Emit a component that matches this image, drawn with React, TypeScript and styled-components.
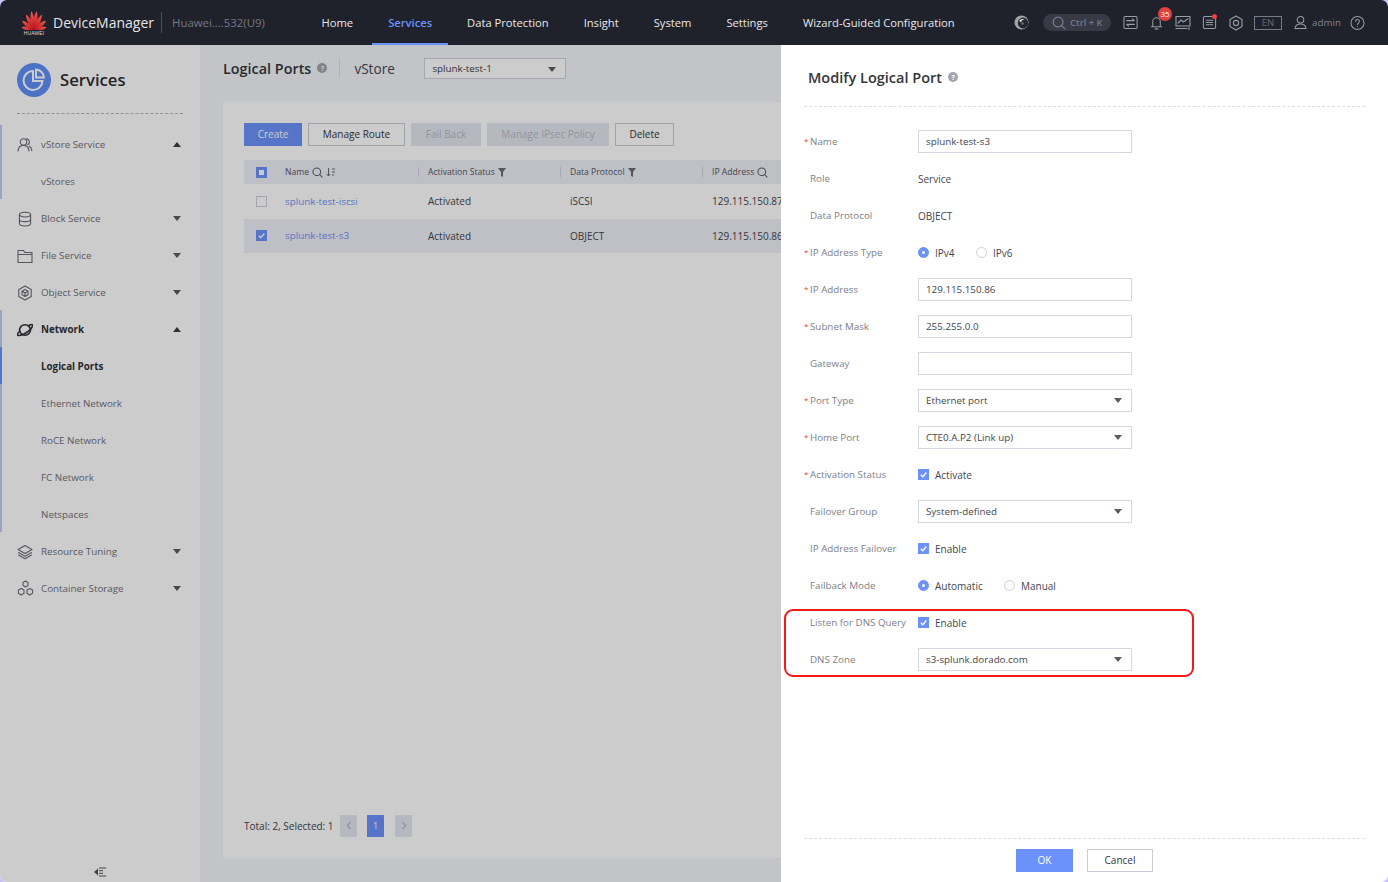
import React from "react";
import styled, { createGlobalStyle } from "styled-components";

const Global = createGlobalStyle`
  html, body { margin: 0; padding: 0; height: 100%; background: #c9c2fb; overflow: hidden; }
  body { font-family: "Open Sans", "Noto Sans", sans-serif; color: #333; }
  * { box-sizing: border-box; }
`;

const Shell = styled.div`
  position: relative; width: 1388px; height: 882px; border-radius: 7px; overflow: hidden;
  display: flex; flex-direction: column; background: #f4f5fb;
`;

/* Top bar */
const TopBar = styled.header`
  position: relative; z-index: 3; flex: 0 0 45px; height: 45px; display: flex; align-items: stretch;
  background: #1f212b; color: #fff; padding-left: 21px;
`;
const Brand = styled.div`display: flex; align-items: center; flex: 0 0 284.5px;`;
const LogoBox = styled.div`display: flex; flex-direction: column; align-items: center; width: 26px; margin-top: 1px;`;
const LogoWord = styled.span`font-family: "Liberation Sans", sans-serif; font-size: 5px; line-height: 6px; letter-spacing: .1px; color: #ddd;`;
const Product = styled.span`margin-left: 6px; font-size: 14px; color: #e4e5e8; white-space: nowrap; width: 108px;`;
const VSep = styled.span`width: 1px; height: 21px; background: #4b4d57;`;
const Device = styled.span`margin-left: 10px; font-size: 11.4px; color: #777a84; white-space: nowrap;`;
const Nav = styled.nav`display: flex; gap: 3px; flex: 0 0 695px;`;
const NavItem = styled.a<{ $active?: boolean }>`
  display: flex; align-items: center; padding: 1px 16px 0; font-size: 11.2px; white-space: nowrap; height: 45px;
  color: ${p => (p.$active ? "#6c92fa" : "#e8e9ec")}; font-weight: ${p => (p.$active ? 600 : 400)};
  border-bottom: 2px solid ${p => (p.$active ? "#6c92fa" : "transparent")};
`;
const Tools = styled.div`display: flex; align-items: center; color: #9a9da6; margin-left: 10.5px; height: 45px;`;
const Pill = styled.div`
  display: flex; align-items: center; width: 68px; height: 17px; margin-left: 11px; border-radius: 9px; background: #383b46;
  padding-left: 9px; gap: 4px; font-size: 9.4px; font-weight: 600; color: #757985; white-space: nowrap;
`;
const ToolSlot = styled.span<{ $w: number }>`
  position: relative; display: flex; align-items: center; justify-content: center; width: ${p => p.$w}px;
`;
const Badge = styled.span`
  position: absolute; left: 9px; top: -7px; width: 14px; height: 14px; border-radius: 50%; background: #e2403f; color: #fff;
  font-size: 8px; line-height: 14px; text-align: center;
`;
const Dot = styled.span`position: absolute; left: 10px; top: -1px; width: 5px; height: 5px; border-radius: 50%; background: #e8413f;`;
const Lang = styled.span`
  display: block; width: 28px; height: 14px; margin-left: -1px; border: 1px solid #777a84; font-size: 9.5px; line-height: 12px;
  text-align: center; color: #666a74;
`;
const Admin = styled.span`font-size: 9.8px; color: #82858e; margin-left: -6px; width: 38px;`;

const Body = styled.div`flex: 1; display: flex; min-height: 0;`;

/* Sidebar */
const Sidebar = styled.aside`position: relative; flex: 0 0 200px; background: #fff; padding: 0 17px; display: flex; flex-direction: column;`;
const SideHead = styled.div`
  height: 69px; display: flex; align-items: center; gap: 9px; padding-top: 1px;
  border-bottom: 1px dashed #b5b8c3; font-size: 16.7px; font-weight: 600; color: #2b2d33;
`;
const Menu = styled.div`display: flex; flex-direction: column; margin: 11px -17px 0;`;
const MenuGroup = styled.div<{ $open?: boolean }>`
  position: relative; display: flex; flex-direction: column;
  border-left: 2px solid ${p => (p.$open ? "#c0cdf4" : "transparent")};
`;
const MenuRow = styled.div<{ $strong?: boolean; $sub?: boolean; $active?: boolean }>`
  position: relative; height: 37px; display: flex; align-items: center; padding: 2px 0 0 ${p => (p.$sub ? 39 : 15)}px;
  font-size: 9.8px; font-weight: ${p => (p.$strong ? 700 : 400)}; color: ${p => (p.$strong ? "#2f3138" : "#6f7178")};
  ${p => (p.$active ? "box-shadow: -2px 0 0 #6c92fa;" : "")}
`;
const MenuIcon = styled.span`display: flex; width: 24px; color: #6b6d75;`;
const MenuIconDark = styled(MenuIcon)`color: #2f3138;`;
const Caret = styled.span<{ $up?: boolean }>`
  position: absolute; left: 171px; top: 17px; width: 0; height: 0; border-left: 4px solid transparent; border-right: 4px solid transparent;
  ${p => (p.$up ? "border-bottom: 5px solid #3b3d44;" : "border-top: 5px solid #5c5e66;")}
`;
const Collapse = styled.div`position: absolute; left: 94px; bottom: 5px; display: flex; color: #555;`;

/* Main */
const Main = styled.main`flex: 1; display: flex; flex-direction: column; padding: 0 23px 24px 23px; min-width: 0;`;
const PageHead = styled.div`height: 57px; display: flex; align-items: center; padding-bottom: 11px; white-space: nowrap;`;
const PageTitle = styled.h1`margin: 0; font-size: 14.4px; font-weight: 600; color: #33353b;`;
const Help = styled.span`
  display: inline-flex; align-items: center; justify-content: center; width: 10px; height: 10px; border-radius: 50%;
  margin-left: 6px; background: #a2a5ae; color: #fff; font-size: 7px; font-weight: 700;
`;
const HeadSep = styled.span`width: 1px; height: 20px; margin: 0 14px 0 12px; background: #dfe1e8;`;
const StoreLabel = styled.span`font-size: 13.6px; color: #45474e; width: 70px;`;
const PageSelect = styled.div`
  position: relative; width: 142px; height: 21px; margin-top: 1px; border: 1px solid #cfd2dc; background: #fff; padding-left: 7px;
  font-size: 9.8px; line-height: 19px; color: #3b3d44;
`;
const SelectCaret = styled.span`
  position: absolute; right: 9px; top: 8px; width: 0; height: 0; border-left: 4px solid transparent; border-right: 4px solid transparent;
  border-top: 5px solid #5a5c64;
`;
const Card = styled.section`flex: 1; background: #fff; padding: 21px 0 0 21px; display: flex; flex-direction: column; min-height: 0;`;
const Toolbar = styled.div`display: flex; gap: 6px; height: 23px;`;
const Btn = styled.button<{ $kind?: "primary" | "off"; $w: number }>`
  width: ${p => p.$w}px; height: 23px; padding: 0 0 2px; font-family: inherit; font-size: 10px; border-radius: 0;
  ${p => (p.$kind === "primary" ? "background:#6c92fa;color:#fff;border:1px solid #6c92fa;"
    : p.$kind === "off" ? "background:#e4e7f0;color:#b4b8c4;border:1px solid #e4e7f0;"
    : "background:#fff;color:#33353b;border:1px solid #c8ccd8;")}
`;
const Table = styled.div`margin-top: 14px; display: flex; flex-direction: column;`;
const THead = styled.div`display: grid; grid-template-columns: 41px 143px 142px 142px 1fr; height: 24px; align-items: center; background: #eef0f8; font-size: 8.6px; color: #55575e;`;
const TRow = styled.div<{ $sel?: boolean }>`
  display: grid; grid-template-columns: 41px 143px 142px 142px 1fr; height: 34.5px; align-items: center; font-size: 10px; color: #44464d;
  background: ${p => (p.$sel ? "#eef0f8" : "#fff")};
`;
const Th = styled.div`position: relative; display: flex; align-items: center; gap: 3px; height: 100%; color: #55575e;`;
const ThSep = styled.span`position: absolute; left: -10px; top: 7px; height: 10px; width: 1px; background: #d0d3dd;`;
const CheckCell = styled.div`display: flex; padding-left: 12px;`;
const Check = styled.span<{ $state?: "off" | "on" | "part" }>`
  position: relative; display: flex; align-items: center; justify-content: center; width: 11px; height: 11px; flex: none;
  background: ${p => (p.$state === "off" ? "#fff" : "#6c92fa")}; border: 1px solid ${p => (p.$state === "off" ? "#cdd0da" : "#6c92fa")};
`;
const PartMark = styled.span`width: 5px; height: 5px; background: #fff;`;
const Link = styled.span`color: #6c92fa; font-size: 9.8px;`;
const Spacer = styled.div`flex: 1;`;
const Pager = styled.div`display: flex; align-items: center; height: 23px; margin-bottom: 21px; font-size: 10px; color: #44464d;`;
const PagerText = styled.span`width: 96px; white-space: nowrap;`;
const PageBtn = styled.span<{ $on?: boolean; $gap?: number }>`
  display: flex; align-items: center; justify-content: center; width: 17px; height: 22px; margin-right: ${p => p.$gap ?? 10}px;
  background: ${p => (p.$on ? "#6c92fa" : "#e4e7f0")}; color: ${p => (p.$on ? "#fff" : "#b0b4c0")}; font-size: 9px;
`;

/* Mask and drawer */
const Mask = styled.div`position: absolute; left: 0; right: 0; top: 45px; bottom: 0; background: rgba(0,0,0,.2); z-index: 1;`;
const Drawer = styled.aside`
  position: absolute; z-index: 2; left: 781px; right: 0; top: 45px; bottom: 0; background: #fff; padding: 0 23px; display: flex; flex-direction: column;
`;
const DrawerHead = styled.div`
  height: 62px; display: flex; align-items: center; padding: 3px 0 0 4px; border-bottom: 1px dashed #dcdee8;
  font-size: 14.500px; font-weight: 600; color: #33353b; white-space: nowrap;
`;
const Form = styled.div`display: flex; flex-direction: column; padding-top: 16px; flex: 1;`;
const Row = styled.div`display: flex; align-items: center; height: 37px; font-size: 10px; color: #44464d;`;
const Label = styled.label<{ $req?: boolean }>`
  position: relative; flex: 0 0 114px; padding-left: 6px; color: #7d8088; font-size: 9.8px; white-space: nowrap;
  ${p => (p.$req ? `&::before { content: "*"; position: absolute; left: 0; top: 0; font-size: 8px; color: #e8413f; }` : "")}
`;
const Input = styled.div`
  position: relative; width: 214px; height: 23px; border: 1px solid #d5d7e2; padding-left: 7px; line-height: 21px; color: #44464d; font-size: 9.8px; background: #fff;
`;
const Radio = styled.span<{ $on?: boolean }>`
  position: relative; width: 11px; height: 11px; flex: none; border-radius: 50%; margin-right: 6px;
  border: 1px solid ${p => (p.$on ? "#6c92fa" : "#cdd0da")}; background: ${p => (p.$on ? "#6c92fa" : "#fff")};
  ${p => (p.$on ? `&::after { content: ""; position: absolute; left: 3px; top: 3px; width: 3px; height: 3px; border-radius: 50%; background: #fff; }` : "")}
`;
const Choice = styled.span<{ $w: number }>`display: flex; align-items: center; width: ${p => p.$w}px;`;
const CheckText = styled.span`margin-left: 6px;`;
const Focus = styled.div`position: relative; display: flex; flex-direction: column;`;
const Highlight = styled.div`
  position: absolute; left: -20px; top: 5px; width: 410px; height: 68px; border: 2px solid #f1191c; border-radius: 9px; pointer-events: none;
`;
const DrawerFoot = styled.div`
  height: 44px; border-top: 1px dashed #dcdee8; display: flex; align-items: flex-start; padding: 10px 0 0 212px; gap: 14px; flex: none;
`;

const Tick = () => (
  <svg width="9" height="9" viewBox="0 0 10 10"><path d="M2 5.2 4.2 7.4 8.2 2.8" fill="none" stroke="#fff" strokeWidth="1.5" /></svg>
);
const petals: [number, number][] = [[-78, .78], [-52, .92], [-27, 1.06], [-8, 1.16], [8, 1.16], [27, 1.06], [52, .92], [78, .78]];
const Logo = () => (
  <svg width="26" height="20" viewBox="-13 -20 26 20">
    <defs>
      <linearGradient id="petal" x1="0" y1="0" x2="0" y2="1">
        <stop offset="0" stopColor="#ee5a50" /><stop offset="1" stopColor="#b90e1a" />
      </linearGradient>
    </defs>
    {petals.map(([a, k]) => (
      <path key={a} d="M0 0C-2.600-5-2.500-12 0-16.500 2.500-12 2.600-5 0 0Z" fill="url(#petal)" transform={`rotate(${a}) scale(1 ${k})`} />
    ))}
  </svg>
);
const Ico = ({ w = 16, h = 16, vb = "0 0 16 16", sw = 1.1, children }: { w?: number; h?: number; vb?: string; sw?: number; children: React.ReactNode }) => (
  <svg width={w} height={h} viewBox={vb} fill="none" stroke="currentColor" strokeWidth={sw} strokeLinecap="round" strokeLinejoin="round">{children}</svg>
);
const SearchIco = ({ s = 11 }: { s?: number }) => (
  <Ico w={s} h={s} vb="0 0 12 12"><circle cx="5.2" cy="5.2" r="4.2" /><path d="M8.4 8.4 11 11" /></Ico>
);
const FilterIco = () => (
  <svg width="8" height="9" viewBox="0 0 8 9"><path d="M0 0H8L5 4V9L3 8V4Z" fill="#6a6c74" /></svg>
);
const Chevron = ({ d }: { d: string }) => (
  <svg width="6" height="9" viewBox="0 0 6 9"><path d={d} fill="none" stroke="currentColor" strokeWidth="1.2" /></svg>
);

const menuIcons: Record<string, React.ReactNode> = {
  users: <Ico><circle cx="6.500" cy="5" r="3.200" /><path d="M1 14c.3-3.600 2.500-5.600 5.500-5.600S11.700 10.400 12 14" /><path d="M9.500 1.900a3.100 3.100 0 0 1 1.300 5.800M12.300 9.300c1.500.9 2.300 2.500 2.600 4.300" /></Ico>,
  db: <Ico><ellipse cx="8" cy="3.600" rx="5.600" ry="2.400" /><path d="M2.400 3.600v9c0 1.300 2.500 2.400 5.600 2.400s5.600-1.100 5.600-2.400v-9M2.400 8.200c0 1.300 2.500 2.400 5.600 2.400s5.600-1.100 5.600-2.400" /></Ico>,
  folder: <Ico><path d="M1 2.500h5.500l1.300 2H15v10H1zM1 6.500h14" /></Ico>,
  hex: <Ico><path d="M8 1 14.200 4.500v7L8 15 1.800 11.500v-7z" /><path d="M8 4.500 11 6.200v3.600L8 11.500 5 9.800V6.200zM5 6.200 8 8l3-1.800M8 8v3.500" /></Ico>,
  planet: <Ico sw={1.600}><ellipse cx="8" cy="8" rx="5.500" ry="5.200" /><path d="M12 3.500C14.500 2 16 2.300 15.500 4 14.800 6.500 11 10 6.500 12.200 2.500 14 0 14 .5 12 .8 11 1.800 10 3 9" /></Ico>,
  layers: <Ico><path d="M8 1.500 15 5.500 8 9.500 1 5.500zM1.500 8.500 8 12.200l6.500-3.700M1.500 11 8 14.700 14.500 11" /></Ico>,
  hexes: <Ico w={17} h={17} vb="0 0 17 17"><path d="M8.500 1 11 2.500v3L8.500 7 6 5.500v-3zM4.200 8.500 7 10v3.300L4.200 15l-2.800-1.700V10zM12.800 8.500 15.600 10v3.300L12.800 15 10 13.300V10z" /></Ico>,
};

const Item = ({ icon, label, caret, strong }: { icon: string; label: string; caret?: "up" | "down"; strong?: boolean }) => {
  const I = strong ? MenuIconDark : MenuIcon;
  return (
    <MenuRow $strong={strong}>
      <I>{menuIcons[icon]}</I>{label}
      {caret && <Caret $up={caret === "up"} />}
    </MenuRow>
  );
};

const Select = ({ value }: { value: string }) => <Input>{value}<SelectCaret /></Input>;
const CheckField = ({ label }: { label: string }) => (
  <><Check $state="on"><Tick /></Check><CheckText>{label}</CheckText></>
);

export default function App() {
  return (
    <Shell>
      <Global />
      <TopBar>
        <Brand>
          <LogoBox><Logo /><LogoWord>HUAWEI</LogoWord></LogoBox>
          <Product>DeviceManager</Product>
          <VSep />
          <Device>Huawei....532(U9)</Device>
        </Brand>
        <Nav>
          <NavItem>Home</NavItem>
          <NavItem $active>Services</NavItem>
          <NavItem>Data Protection</NavItem>
          <NavItem>Insight</NavItem>
          <NavItem>System</NavItem>
          <NavItem>Settings</NavItem>
          <NavItem>Wizard-Guided Configuration</NavItem>
        </Nav>
        <Tools>
          <ToolSlot $w={21}>
            <svg width="15" height="15" viewBox="0 0 15 15"><circle cx="7.500" cy="7.500" r="7" fill="#a3a4a8" /><ellipse cx="9" cy="8" rx="5.200" ry="5.400" fill="#26272d" /><path d="M5 5.800c1.500-2 4-2.400 6-1.300-2.200 0-3.600 1-4 3z" fill="#d8d8da" /><circle cx="8.500" cy="8.500" r="1.300" fill="#6d6e72" /></svg>
          </ToolSlot>
          <Pill><SearchIco s={14} />Ctrl + K</Pill>
          <ToolSlot $w={38}>
            <Ico w={15} h={15}><rect x="1" y="1.500" width="14" height="13" rx="1.500" /><path d="M4 6h8l-2-2M12 10H4l2 2" /></Ico>
          </ToolSlot>
          <ToolSlot $w={15}>
            <Ico w={17} h={17}><path d="M2.500 12.500h11M4 12.500V7a4 4 0 0 1 8 0v5.500M6.500 14.800h3" /></Ico>
            <Badge>35</Badge>
          </ToolSlot>
          <ToolSlot $w={38}>
            <Ico w={16} h={16}><rect x="1" y="1.500" width="14" height="9.500" /><path d="M3 8l3-3 2.500 2L13 3.800M1 13.500h11M14 12.500v2" /></Ico>
          </ToolSlot>
          <ToolSlot $w={15}>
            <Ico w={15} h={15}><rect x="1.500" y="1.500" width="13" height="13" rx="1.500" /><path d="M4.500 5.500h7M4.500 8h7M4.500 10.500h7" /></Ico>
            <Dot />
          </ToolSlot>
          <ToolSlot $w={38}>
            <Ico w={16} h={16}><path d="M8 1 14 4.500v7L8 15 2 11.500v-7z" /><circle cx="8" cy="8" r="2.600" /></Ico>
          </ToolSlot>
          <Lang>EN</Lang>
          <ToolSlot $w={36}>
            <Ico w={15} h={15}><circle cx="8" cy="5" r="3.500" /><path d="M2 14.500c.4-3.400 2.500-5 6-5s5.600 1.600 6 5z" /></Ico>
          </ToolSlot>
          <Admin>admin</Admin>
          <ToolSlot $w={15}>
            <Ico w={16} h={16}><circle cx="8" cy="8" r="7" /><path d="M6 6.200a2 2 0 1 1 3.200 1.600C8.400 8.400 8 8.800 8 9.700M8 11.800v.2" /></Ico>
          </ToolSlot>
        </Tools>
      </TopBar>
      <Body>
        <Sidebar>
          <SideHead>
            <svg width="34" height="34" viewBox="0 0 34 34">
              <circle cx="17" cy="17" r="17" fill="#5e8ff8" />
              <path d="M16 8a9.500 9.500 0 1 0 9.500 10H16z" fill="none" stroke="#fff" strokeWidth="2" />
              <path d="M19 6.500a8.500 8.500 0 0 1 8 8h-8zM19 10.500v4" fill="none" stroke="#fff" strokeWidth="2" />
            </svg>
            Services
          </SideHead>
          <Menu>
            <MenuGroup $open>
              <Item icon="users" label="vStore Service" caret="up" />
              <MenuRow $sub>vStores</MenuRow>
            </MenuGroup>
            <MenuGroup>
              <Item icon="db" label="Block Service" caret="down" />
              <Item icon="folder" label="File Service" caret="down" />
              <Item icon="hex" label="Object Service" caret="down" />
            </MenuGroup>
            <MenuGroup $open>
              <Item icon="planet" label="Network" caret="up" strong />
              <MenuRow $sub $strong $active>Logical Ports</MenuRow>
              <MenuRow $sub>Ethernet Network</MenuRow>
              <MenuRow $sub>RoCE Network</MenuRow>
              <MenuRow $sub>FC Network</MenuRow>
              <MenuRow $sub>Netspaces</MenuRow>
            </MenuGroup>
            <MenuGroup>
              <Item icon="layers" label="Resource Tuning" caret="down" />
              <Item icon="hexes" label="Container Storage" caret="down" />
            </MenuGroup>
          </Menu>
          <Collapse>
            <svg width="12" height="10" viewBox="0 0 12 10"><path d="M0 5 4 1.500v7z" fill="currentColor" /><path d="M5 1h7M5 3.700h4M5 6.300h4M5 9h7" stroke="currentColor" strokeWidth="1" /></svg>
          </Collapse>
        </Sidebar>
        <Main>
          <PageHead>
            <PageTitle>Logical Ports</PageTitle>
            <Help>?</Help>
            <HeadSep />
            <StoreLabel>vStore</StoreLabel>
            <PageSelect>splunk-test-1<SelectCaret /></PageSelect>
          </PageHead>
          <Card>
            <Toolbar>
              <Btn $kind="primary" $w={58}>Create</Btn>
              <Btn $w={97}>Manage Route</Btn>
              <Btn $kind="off" $w={70}>Fail Back</Btn>
              <Btn $kind="off" $w={122}>Manage IPsec Policy</Btn>
              <Btn $w={59}>Delete</Btn>
            </Toolbar>
            <Table>
              <THead>
                <CheckCell><Check $state="part"><PartMark /></Check></CheckCell>
                <Th>Name <SearchIco />
                  <svg width="9" height="9" viewBox="0 0 9 9"><path d="M2.500 0v8M.5 6l2 2 2-2M6 1h3M6 4h3M6 7h2" fill="none" stroke="#6a6c74" /></svg>
                </Th>
                <Th><ThSep />Activation Status <FilterIco /></Th>
                <Th><ThSep />Data Protocol <FilterIco /></Th>
                <Th><ThSep />IP Address <SearchIco /></Th>
              </THead>
              <TRow>
                <CheckCell><Check $state="off" /></CheckCell>
                <Link>splunk-test-iscsi</Link><span>Activated</span><span>iSCSI</span><span>129.115.150.87</span>
              </TRow>
              <TRow $sel>
                <CheckCell><Check $state="on"><Tick /></Check></CheckCell>
                <Link>splunk-test-s3</Link><span>Activated</span><span>OBJECT</span><span>129.115.150.86</span>
              </TRow>
            </Table>
            <Spacer />
            <Pager>
              <PagerText>Total: 2, Selected: 1</PagerText>
              <PageBtn><Chevron d="M4.500 1 1.500 4.500 4.500 8" /></PageBtn>
              <PageBtn $on $gap={11}>1</PageBtn>
              <PageBtn><Chevron d="M1.500 1 4.500 4.500 1.500 8" /></PageBtn>
            </Pager>
          </Card>
        </Main>
      </Body>
      <Mask />
      <Drawer>
        <DrawerHead>Modify Logical Port<Help>?</Help></DrawerHead>
        <Form>
          <Row><Label $req>Name</Label><Input>splunk-test-s3</Input></Row>
          <Row><Label>Role</Label>Service</Row>
          <Row><Label>Data Protocol</Label>OBJECT</Row>
          <Row><Label $req>IP Address Type</Label><Choice $w={58}><Radio $on />IPv4</Choice><Choice $w={60}><Radio />IPv6</Choice></Row>
          <Row><Label $req>IP Address</Label><Input>129.115.150.86</Input></Row>
          <Row><Label $req>Subnet Mask</Label><Input>255.255.0.0</Input></Row>
          <Row><Label>Gateway</Label><Input /></Row>
          <Row><Label $req>Port Type</Label><Select value="Ethernet port" /></Row>
          <Row><Label $req>Home Port</Label><Select value="CTE0.A.P2 (Link up)" /></Row>
          <Row><Label $req>Activation Status</Label><CheckField label="Activate" /></Row>
          <Row><Label>Failover Group</Label><Select value="System-defined" /></Row>
          <Row><Label>IP Address Failover</Label><CheckField label="Enable" /></Row>
          <Row><Label>Failback Mode</Label><Choice $w={86}><Radio $on />Automatic</Choice><Choice $w={60}><Radio />Manual</Choice></Row>
          <Focus>
            <Row><Label>Listen for DNS Query</Label><CheckField label="Enable" /></Row>
            <Row><Label>DNS Zone</Label><Select value="s3-splunk.dorado.com" /></Row>
            <Highlight />
          </Focus>
        </Form>
        <DrawerFoot>
          <Btn $kind="primary" $w={57}>OK</Btn>
          <Btn $w={66}>Cancel</Btn>
        </DrawerFoot>
      </Drawer>
    </Shell>
  );
}
